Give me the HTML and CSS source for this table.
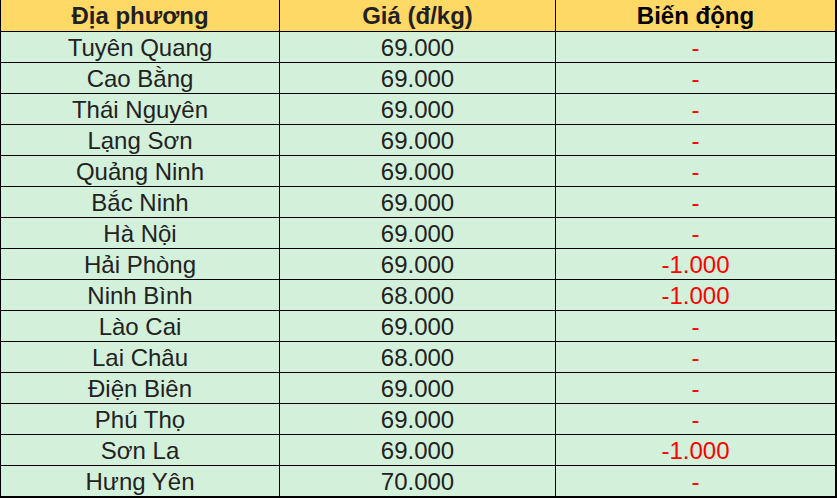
FILE: index.html
```html
<!DOCTYPE html>
<html lang="vi">
<head>
<meta charset="utf-8">
<link rel="stylesheet" href="styles.css">
</head>
<body>
<div class="table">
  <div class="cell head">Địa phương</div><div class="cell head">Giá (đ/kg)</div><div class="cell head dark">Biến động</div>
  <div class="cell">Tuyên Quang</div><div class="cell">69.000</div><div class="cell red">-</div>
  <div class="cell">Cao Bằng</div><div class="cell">69.000</div><div class="cell red">-</div>
  <div class="cell">Thái Nguyên</div><div class="cell">69.000</div><div class="cell red">-</div>
  <div class="cell">Lạng Sơn</div><div class="cell">69.000</div><div class="cell red">-</div>
  <div class="cell">Quảng Ninh</div><div class="cell">69.000</div><div class="cell red">-</div>
  <div class="cell">Bắc Ninh</div><div class="cell">69.000</div><div class="cell red">-</div>
  <div class="cell">Hà Nội</div><div class="cell">69.000</div><div class="cell red">-</div>
  <div class="cell">Hải Phòng</div><div class="cell">69.000</div><div class="cell red">-1.000</div>
  <div class="cell">Ninh Bình</div><div class="cell">68.000</div><div class="cell red">-1.000</div>
  <div class="cell">Lào Cai</div><div class="cell">69.000</div><div class="cell red">-</div>
  <div class="cell">Lai Châu</div><div class="cell">68.000</div><div class="cell red">-</div>
  <div class="cell">Điện Biên</div><div class="cell">69.000</div><div class="cell red">-</div>
  <div class="cell">Phú Thọ</div><div class="cell">69.000</div><div class="cell red">-</div>
  <div class="cell">Sơn La</div><div class="cell">69.000</div><div class="cell red">-1.000</div>
  <div class="cell">Hưng Yên</div><div class="cell">70.000</div><div class="cell red">-</div>
</div>
</body>
</html>
```
FILE: styles.css
```css
html, body {
  margin: 0;
  padding: 0;
  background: #ffffff;
}
.table {
  display: grid;
  grid-template-columns: 278px 275px 279px;
  grid-template-rows: 31px repeat(15, 30px);
  gap: 1px;
  padding: 0 2px 2px 1px;
  background: #000000;
  width: 837px;
  height: 498px;
  box-sizing: border-box;
  font-family: "Liberation Sans", Arial, sans-serif;
  font-size: 24px;
}
.cell {
  background: #d3f0da;
  color: #222222;
  display: flex;
  align-items: center;
  justify-content: center;
  line-height: 1;
  padding-top: 1px;
}
.head {
  background: #ffd966;
  font-weight: bold;
  color: #1f1f24;
}
.dark {
  color: #000000;
}
.red {
  color: #ff0000;
}
```
